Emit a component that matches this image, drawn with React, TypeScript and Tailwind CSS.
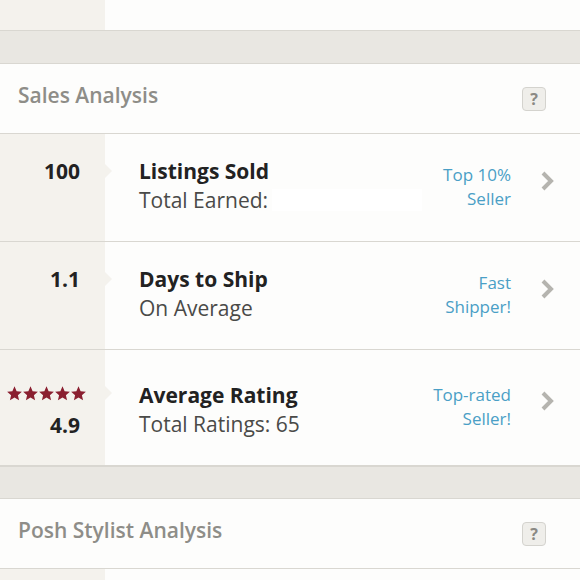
import React from "react";

const FONT = { fontFamily: "'Open Sans', 'Liberation Sans', sans-serif" };

type Row = {
  value: string;
  stars?: boolean;
  title: string;
  sub: React.ReactNode;
  badge: [string, string];
  h: string;
  pt: string;
};

const ROWS: Row[] = [
  {
    value: "100",
    title: "Listings Sold",
    sub: (
      <span className="flex items-center">
        Total Earned:
        <span className="ml-1 inline-block h-[22px] w-[150px] bg-white" />
      </span>
    ),
    badge: ["Top 10%", "Seller"],
    h: "h-[108px]",
    pt: "pt-[25px]",
  },
  {
    value: "1.1",
    title: "Days to Ship",
    sub: "On Average",
    badge: ["Fast", "Shipper!"],
    h: "h-[108px]",
    pt: "pt-[25px]",
  },
  {
    value: "4.9",
    stars: true,
    title: "Average Rating",
    sub: "Total Ratings: 65",
    badge: ["Top-rated", "Seller!"],
    h: "h-[116px]",
    pt: "pt-[33px]",
  },
];

function Star() {
  return (
    <svg width="15" height="15" viewBox="1 1 22 22">
      <path
        d="M12 1.5l3.1 7.1 7.7.7-5.8 5.1 1.7 7.6L12 18l-6.7 4 1.7-7.6L1.2 9.3l7.7-.7z"
        fill="#8a1f30"
      />
    </svg>
  );
}

function Chevron() {
  return (
    <svg width="14" height="22" viewBox="0 0 14 22">
      <path d="M3 3l8 8-8 8" stroke="#b5b4af" strokeWidth="4" fill="none" />
    </svg>
  );
}

function Header({ label }: { label: string }) {
  return (
    <div className="flex h-[70px] items-center justify-between border-b border-[#d9d7d1] bg-[#fdfdfc] pl-[18px] pr-[34px]">
      <span className="mb-[6px] text-[21px] font-semibold text-[#8e8d88]">{label}</span>
      <span className="flex h-[24px] w-[24px] items-center justify-center rounded-[4px] border border-[#d4d3ce] bg-[#efeeea] text-[16px] font-bold text-[#8a8984]">
        ?
      </span>
    </div>
  );
}

function StatRow({ row }: { row: Row }) {
  return (
    <div className={`flex ${row.h} border-b border-[#d9d7d1] bg-[#fdfdfc]`}>
      <div className={`relative flex w-[105px] shrink-0 flex-col items-end bg-[#f4f2ed] pr-[25px] ${row.stars ? "pt-[36px]" : row.pt}`}>
        {row.stars && (
          <div className="mb-[12px] mr-[-6px] flex h-[15px] gap-[1px]">
            {[0, 1, 2, 3, 4].map((i) => (
              <Star key={i} />
            ))}
          </div>
        )}
        <span className="text-[21px] font-bold leading-[24px] text-[#222]">{row.value}</span>
        <span
          className={`absolute right-[-7px] ${row.stars ? "top-[36px]" : "top-[30px]"} h-0 w-0 border-y-[7px] border-l-[7px] border-y-transparent border-l-[#f4f2ed]`}
        />
      </div>
      <div className="flex flex-1 pl-[34px] pr-[26px]">
        <div className={`flex flex-1 flex-col gap-[5px] ${row.pt}`}>
          <span className="text-[21px] font-bold leading-[24px] text-[#222]">{row.title}</span>
          <span className="text-[21px] leading-[24px] text-[#4a4a48]">{row.sub}</span>
        </div>
        <div className="mr-[29px] -mt-[2px] flex flex-col items-end self-center text-[17px] leading-[24px] text-[#4a9fc6]">
          <span>{row.badge[0]}</span>
          <span>{row.badge[1]}</span>
        </div>
        <div className="-mt-[14px] self-center">
          <Chevron />
        </div>
      </div>
    </div>
  );
}

export default function App() {
  return (
    <div className="h-[580px] w-[580px] overflow-hidden bg-[#fdfdfc]" style={FONT}>
      <div className="flex h-[30px] bg-[#fdfdfc]">
        <div className="w-[105px] bg-[#f4f2ed]" />
      </div>
      <div className="h-[34px] border-y border-[#d9d7d1] bg-[#e9e7e2]" />
      <Header label="Sales Analysis" />
      {ROWS.map((r) => (
        <StatRow key={r.title} row={r} />
      ))}
      <div className="h-[33px] border-y border-[#d9d7d1] bg-[#e9e7e2]" />
      <Header label="Posh Stylist Analysis" />
      <div className="flex h-[20px]">
        <div className="w-[105px] bg-[#f4f2ed]" />
      </div>
    </div>
  );
}
